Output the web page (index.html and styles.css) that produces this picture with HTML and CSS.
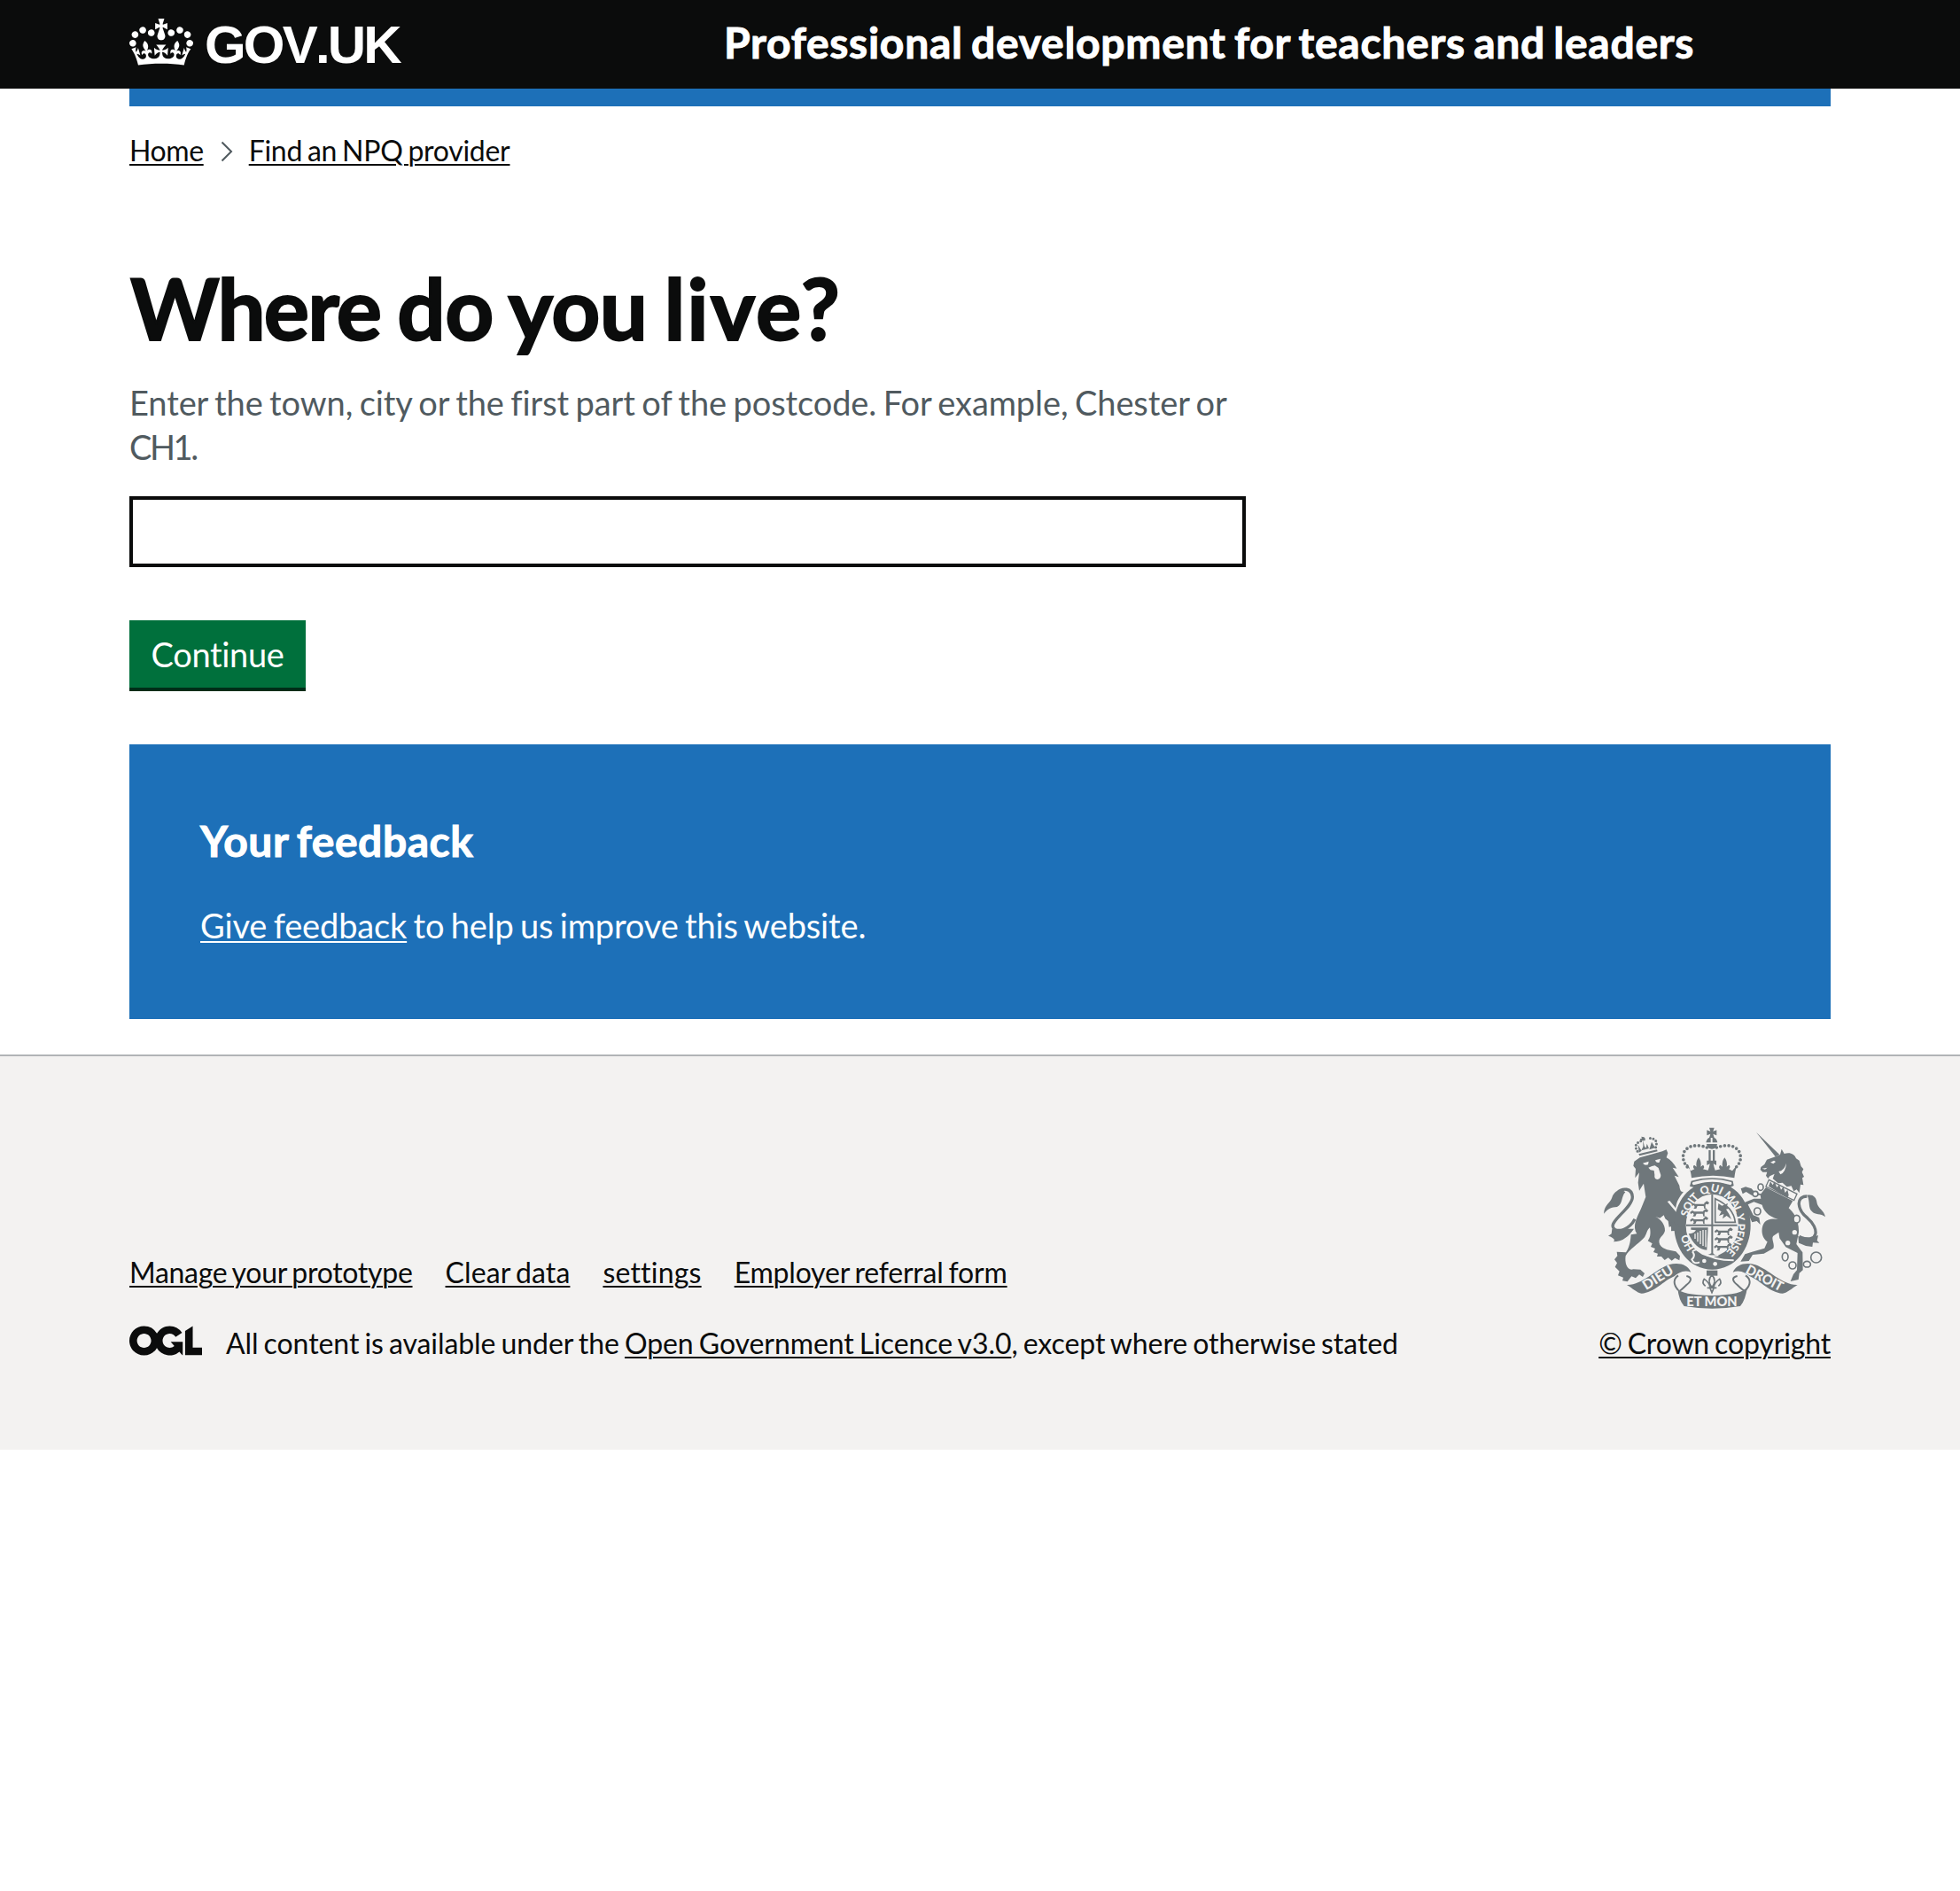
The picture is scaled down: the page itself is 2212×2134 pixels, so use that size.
FILE: index.html
```html
<!DOCTYPE html>
<html lang="en">
<head>
<meta charset="utf-8">
<title>Where do you live?</title>
<link rel="stylesheet" href="styles.css">
</head>
<body>
<header class="header">
  <div class="container header-inner">
    <a class="logo" href="#">
      <svg class="logo-crown" viewBox="0 0 132 97" aria-hidden="true"><path d="M25 30.2c3.5 1.5 7.7-.2 9.1-3.7 1.5-3.6-.2-7.8-3.9-9.2-3.6-1.4-7.6.3-9.1 3.9-1.4 3.5.3 7.5 3.9 9zM9 39.5c3.6 1.5 7.8-.2 9.2-3.7 1.5-3.6-.2-7.8-3.9-9.1-3.6-1.5-7.6.2-9.1 3.8-1.4 3.5.3 7.5 3.8 9zM4.4 57.2c3.5 1.5 7.7-.2 9.1-3.8 1.5-3.6-.2-7.7-3.9-9.1-3.5-1.5-7.6.3-9.1 3.8-1.4 3.5.3 7.6 3.9 9.1zm38.3-21.4c3.5 1.5 7.7-.2 9.1-3.8 1.5-3.6-.2-7.7-3.9-9.1-3.6-1.5-7.6.3-9.1 3.8-1.3 3.6.4 7.7 3.9 9.1zm64.4-5.6c-3.6 1.5-7.8-.2-9.1-3.7-1.5-3.6.2-7.8 3.8-9.2 3.6-1.4 7.7.3 9.2 3.9 1.3 3.5-.4 7.5-3.9 9zm15.9 9.3c-3.6 1.5-7.7-.2-9.1-3.7-1.5-3.6.2-7.8 3.7-9.1 3.6-1.5 7.7.2 9.2 3.8 1.5 3.5-.3 7.5-3.8 9zm4.7 17.7c-3.6 1.5-7.8-.2-9.2-3.8-1.5-3.6.2-7.7 3.9-9.1 3.6-1.5 7.7.3 9.2 3.8 1.3 3.5-.4 7.6-3.9 9.1zM89.3 35.8c-3.6 1.5-7.8-.2-9.2-3.8-1.4-3.6.2-7.7 3.9-9.1 3.6-1.5 7.7.3 9.2 3.8 1.4 3.6-.3 7.7-3.9 9.1zM69.7 17.7l8.9 4.7V9.3l-8.9 2.8c-.2-.3-.5-.6-.9-.9L72.4 0H59.6l3.5 11.2c-.3.3-.6.5-.9.9l-8.8-2.8v13.1l8.8-4.7c.3.3.6.7.9.9l-5 15.4v.1c-.2.8-.4 1.6-.4 2.4 0 4.1 3.1 7.5 7 8.1h.2c.3 0 .7.1 1 .1.4 0 .7 0 1-.1h.2c4-.6 7.1-4.1 7.1-8.1 0-.8-.1-1.7-.4-2.4V34l-5.1-15.4c.4-.2.7-.6 1-.9zM66 92.8c16.9 0 32.8 1.1 47.1 3.2 4-16.9 8.9-26.7 14-33.5l-9.6-3.4c1 4.9 1.1 7.2 0 10.2-1.5-1.4-3-4.3-4.2-8.7L108.6 76c2.8-2 5-3.2 7.5-3.3-4.4 9.4-10 11.9-13.6 11.2-4.3-.8-6.3-4.6-5.6-7.9 1-4.7 5.7-5.9 8-.5 4.3-8.7-3-11.4-7.6-8.8 7.1-7.2 7.9-13.5 2.1-21.1-8 6.1-8.1 12.3-4.5 20.8-4.7-5.4-12.1-2.5-9.5 6.2 3.4-5.2 7.9-2 7.2 3.1-.6 4.3-6.4 7.8-13.5 7.2-10.3-.9-10.9-8-11.2-13.8 2.5-.5 7.1 1.8 11 7.3L80.2 60c-4.1 4.4-8 5.3-12.3 5.4 1.4-4.4 8-11.6 8-11.6H55.5s6.4 7.2 7.9 11.6c-4.2-.1-8-1-12.3-5.4l1.4 16.4c3.9-5.5 8.5-7.7 10.9-7.3-.3 5.8-.9 12.8-11.1 13.8-7.2.6-12.9-2.9-13.5-7.2-.7-5 3.8-8.3 7.1-3.1 2.7-8.7-4.6-11.6-9.4-6.2 3.7-8.5 3.6-14.7-4.6-20.8-5.8 7.6-5 13.9 2.2 21.1-4.7-2.6-11.9.1-7.7 8.8 2.3-5.5 7.1-4.2 8.1.5.7 3.3-1.3 7.1-5.7 7.9-3.5.7-9-1.8-13.5-11.2 2.5.1 4.7 1.3 7.5 3.3l-4.7-15.4c-1.2 4.4-2.7 7.2-4.3 8.7-1.1-3-.9-5.3 0-10.2l-9.5 3.4c5 6.9 9.9 16.7 14 33.5 14.8-2.1 30.8-3.2 47.7-3.2z"/></svg>
      <span class="logo-text">GOV.UK</span>
    </a>
    <a class="service-name" href="#">Professional development for teachers and leaders</a>
  </div>
</header>

<div class="container">
  <div class="header-bar"></div>
  <nav class="breadcrumbs">
    <a class="crumb-home" href="#">Home</a>
    <svg class="chevron" viewBox="0 0 14 24" aria-hidden="true"><path d="M1.500 1.500L12 12L1.500 22.500"/></svg>
    <a class="crumb-page" href="#">Find an NPQ provider</a>
  </nav>

  <main class="main">
    <h1 class="title"><label for="location"><span class="title-start">Where</span> do you <span class="title-end">live?</span></label></h1>
    <p class="hint">Enter the town, city or the first part of the postcode. For example, Chester or<br><span class="code">CH1.</span></p>
    <input class="input" id="location" type="text">
    <button class="button">Continue</button>
  </main>

  <section class="feedback">
    <h2 class="feedback-title">Your feedback</h2>
    <p class="feedback-text"><a href="#">Give feedback</a> to help us improve this website.</p>
  </section>
</div>

<footer class="footer">
  <div class="container footer-inner">
    <div class="footer-main">
      <nav class="footer-links">
        <a class="link-manage" href="#">Manage your prototype</a>
        <a class="link-clear" href="#">Clear data</a>
        <a class="link-settings" href="#">settings</a>
        <a class="link-employer" href="#">Employer referral form</a>
      </nav>
      <div class="licence">
        <svg class="ogl" viewBox="0 0 483.200 195.700" aria-hidden="true"><path d="M421.5 142.8V.1l-50.7 32.3v161.1h112.4v-50.7zm-122.3-9.6A47.12 47.12 0 0 1 221 97.8c0-26 21.100-47.100 47.100-47.100 16.700 0 31.400 8.700 39.700 21.800l42.700-27.200A97.63 97.63 0 0 0 268.100 0c-36.500 0-68.300 20.100-85.100 49.700A98 98 0 0 0 97.800 0C43.900 0 0 43.900 0 97.800s43.900 97.800 97.800 97.800c36.500 0 68.300-20.100 85.100-49.700a97.76 97.76 0 0 0 149.600 25.400l19.400 22.200h3v-87.800h-80l24.300 27.500zM97.800 145c-26 0-47.100-21.100-47.100-47.100s21.100-47.100 47.100-47.100 47.100 21.100 47.100 47.100S123.800 145 97.800 145"/></svg>
        <span class="licence-text">All content is available under the <a href="#">Open Government Licence v3.0</a>, except where otherwise stated</span>
      </div>
    </div>
    <div class="crown">
      <svg class="arms" viewBox="60 64 750 615" aria-hidden="true">
        <defs>
          <path id="garter" d="M427 509A97 114 0 0 1 427 283A97 114 0 0 1 427 509"/>
          <g id="walker"><path d="M0 8l8-6 6 4h30l8-8 3 2-6 10v10l5 2h-9l-2-9H22l-4 9h-9l4-6-3-6-8 4z"/><path d="M44 4l10-8 8 6-4 6z"/></g>
        </defs>
        <!-- lion -->
        <path d="M163 180L182 167L258 146L272 140L277 152L272 167C285 174 297 186 307 204L293 201L314 233L299 228L316 262C318 280 322 285 330 282C317 300 305 312 303 345L331 388L337 412L328 426L319 410L312 422L300 415L288 416L289 400L281 402L278 382L268 374L263 362L250 372L235 367C255 377 268 395 267 415C262 435 240 438 250 462C262 480 285 480 304 485L318 500L316 515L301 507L290 516L278 506L266 514L255 502L240 502L243 492L228 487L234 475L219 469L224 458L209 449C216 440 220 428 216 404C205 412 205 430 195 440C175 462 148 475 134 500C130 525 140 552 160 545L184 546L198 559L192 571L180 563L168 575L154 569L140 587L123 584L126 573L108 566L113 552L98 537L105 524L96 512L106 500L104 486L135 488C150 465 150 445 152 428L172 425C155 400 172 370 186 340L202 300L195 255L180 279L176 252L180 218L166 236L168 205L160 195Z"/>
        <path d="M165 375C150 405 105 430 91 402C82 380 158 335 157 300C155 268 122 270 108 284" class="tail"/>
        <path d="M133 284C112 270 95 282 88 302C82 322 62 326 60 357C75 340 85 335 105 334C125 325 118 300 133 284ZM88 408L86 425L75 432C95 438 100 448 92 452C125 452 145 432 162 408Z"/>
        <path class="cut" d="M192 186l20-6-2 11q-12 4-18-5zM234 176l18-5-4 12q-12 3-14-7zM211 201l12-5 10-2 12 8 8 24q0 14-12 15-11-2-9-16l-2-14-12-2zM275 316l56 66 6-3-54-66z"/>
        <path d="M178 155L240 140L242 146L181 161Z"/>
        <g class="beads small"><path d="M174 146Q158 120 187 111"/><path d="M236 132Q246 103 215 101"/></g>
        <path d="M187 96l10 2 2 12-8-1zM182 104l17-4 2 8-16 2zM193 108l4 20 8 10-18 5 6-13zM176 124l12 20-9 6zM222 114l12 20-20 6zM206 120l7 16-11 3z"/>
        <!-- royal crown -->
        <path d="M417 66h17l-4 12 12-4v18l-12-5 4 13h-17l4-13-12 5V74l12 4z"/>
        <path d="M406 116q3-16 16-18v18zM428 98q14 2 17 18h-17zM408 121h36q-2 17-18 17t-18-17zM415 142h7v36h-7zM429 142h7v36h-7z"/>
        <g class="beads"><path d="M409 133C390 125 345 118 330 152Q323 185 352 207"/><path d="M442 133C465 125 505 118 521 152Q530 185 499 207"/></g>
        <path d="M337 190l18 22 12-6q-8-8-1-14l8 6q-4-16 7-31 11 15 7 31l8-6q8 8-1 14l18 4q4-10 6-22l-10 5v-16h32v16l-10-5q2 12 6 22l18-4q-9-6-1-14l8 6q-4-16 7-31 11 15 7 31l8-6q7 6-1 14l12 6 18-22q-8 18-11 46-72-16-145 0-3-28-12-46z"/>
        <path d="M356 246Q426 226 497 246L500 262L488 268Q426 242 366 268L351 264Z"/>
        <path class="cut" d="M362 250Q426 230 492 250Q496 254 490 260Q426 240 364 260Q356 256 362 250Z"/>
        <!-- garter and shield -->
        <path d="M427 249C505 249 557 318 557 397S505 546 427 546S298 476 298 397S350 249 427 249Z"/>
        <ellipse class="cut" cx="427" cy="397" rx="89" ry="106"/>
        <path d="M424 292h6v101h84v6h-84v92q6 8 14 5l-36 1q10-2 16-6V399h-85v-6h85z"/>
        <use href="#walker" x="355" y="318"/><use href="#walker" x="352" y="344"/><use href="#walker" x="352" y="370"/>
        <use href="#walker" x="435" y="408"/><use href="#walker" x="435" y="434"/><use href="#walker" x="433" y="460"/>
        <path d="M355 404L413 404L409 480Q370 478 347 425Q365 425 372 413L355 411Z"/>
        <path class="scratch" d="M405 412V470M396 412V466M387 415V460M378 420V452M369 425V442"/>
        <path class="tressure" d="M437 306V386H505Q500 335 437 306Z"/>
        <path d="M448 322l12 8 20-8-4 12 12 4-14 4 10 16 8 18-16-12-14 10 4-16-16 6 8-14-12-8z"/>
        <path d="M447 498Q490 480 505 445L520 480L480 520Z"/>
        <text class="motto"><textPath href="#garter" startOffset="11.500%" textLength="54">HO</textPath></text>
        <text class="motto"><textPath href="#garter" startOffset="29.500%" textLength="78">SOIT</textPath></text>
        <text class="motto"><textPath href="#garter" startOffset="44%" textLength="68">QUI</textPath></text>
        <text class="motto"><textPath href="#garter" startOffset="56.500%" textLength="72">MAL</textPath></text>
        <text class="motto"><textPath href="#garter" startOffset="69%">Y</textPath></text>
        <text class="motto"><textPath href="#garter" startOffset="74%" textLength="106">PENSE</textPath></text>
        <path class="outline" d="M360 485Q372 472 390 485Q430 515 500 515M360 485Q372 500 358 512Q366 530 384 521"/>
        <circle class="cut" cx="400" cy="517" r="7"/><circle class="cut" cx="437" cy="527" r="7"/>
        <path d="M286 388l10-4 8 12 8-4 3 10 12-2 10 14-7 14-12-14-8 7-10-8-10 2z"/>
        <!-- unicorn -->
        <path d="M576 81L655 157L641 164Z"/>
        <path d="M641 164L657 157L662 138L671 154C692 148 706 156 711 170L722 177L728 197L736 206L731 216L738 232L732 236L736 260L726 258L722 287L713 275L703 281L695 263L680 266L665 252L650 254L632 238L638 222L622 230L616 238L609 228L613 216L598 216L590 208L592 199L604 190L612 174Z"/>
        <path class="cut" d="M624 183l12-6 6 4-8 7zM652 214q18-2 26-28-2 30-20 38zM596 204l18-3-8 6z"/>
        <path class="outline-dark" d="M619 242L714 290L704 312L609 265Z"/>
        <path d="M618 264l6-16 8 12 6-12 8 20 8-10 6 18 8-10 6 20 8-10 4 18-4 10z"/>
        <path d="M609 268L700 314L686 338C700 350 722 378 720 420L712 460L733 488L734 548L722 558L719 580L692 586L702 562L714 548L716 490L676 470L655 440L652 420L634 432C625 440 640 460 634 474L602 492L564 496L551 517L523 519L538 494L562 486L604 474L614 452C590 435 592 400 605 385Q620 370 650 376C615 365 600 345 596 327L568 317L548 326L566 362L586 370L590 394L578 382L562 386L534 326L538 318L568 306L592 306L590 294L560 294L542 283L530 290L524 272L540 266L560 272L572 285L592 290Z"/>
        <path class="tail" d="M722 435C790 462 790 405 750 372C715 345 708 298 748 298"/>
        <path d="M748 294C768 290 780 300 782 322C786 340 806 345 810 368C795 355 775 362 765 350C750 335 760 315 748 294ZM718 432L742 445L786 430L782 448L790 456L768 455L766 469L744 466L720 456Z"/>
        <g class="chain"><ellipse cx="591" cy="267" rx="9" ry="11"/><circle cx="573" cy="290" r="9"/><ellipse cx="580" cy="349" rx="11" ry="12"/><ellipse cx="713" cy="375" rx="11" ry="13"/><ellipse cx="674" cy="503" rx="10" ry="14"/><circle cx="699" cy="532" r="12"/><ellipse cx="748" cy="528" rx="12" ry="10"/><circle cx="779" cy="505" r="18"/></g>
        <circle class="cut" cx="706" cy="420" r="8"/><circle class="cut" cx="683" cy="456" r="8"/>
        <!-- motto scroll -->
        <path d="M138 598C190 600 235 545 280 530C310 520 345 527 355 555C330 545 310 560 300 568C260 585 230 625 188 627C172 625 158 610 138 598Z"/>
        <path d="M716 598C665 600 618 545 573 530C543 520 508 527 497 555C522 545 543 560 553 568C593 585 623 625 665 627C682 625 696 610 716 598Z"/>
        <path class="fold" d="M340 568Q368 575 340 598Q320 618 316 618M312 566Q286 585 312 616M512 568Q484 575 512 598Q532 618 538 618M540 566Q568 585 540 616"/>
        <path d="M310 610Q320 632 427 634Q532 632 546 604Q540 650 522 670Q427 686 332 670Q314 650 310 610Z"/>
        <path d="M408 549h37v18h-37z"/>
        <path class="lily" d="M426 564Q444 584 426 606Q408 584 426 564ZM420 606Q416 588 400 578Q390 592 404 602M432 606Q436 588 452 578Q462 592 448 602M410 608H442M420 610L426 624L432 610"/>
        <text class="scroll" transform="translate(203 617) rotate(-32)" textLength="114" lengthAdjust="spacingAndGlyphs">DIEU</text>
        <text class="scroll" x="340" y="670" textLength="172" lengthAdjust="spacingAndGlyphs">ET MON</text>
        <text class="scroll" transform="translate(537 557) rotate(28)" textLength="136" lengthAdjust="spacingAndGlyphs">DROIT</text>
      </svg>
      <a class="copyright" href="#">© Crown copyright</a>
    </div>
  </div>
</footer>
</body>
</html>
```
FILE: styles.css
```css
* { box-sizing: border-box; }
body {
  margin: 0;
  background: #fff;
  color: #0b0c0c;
  font-family: Lato, "Noto Sans", sans-serif;
  font-size: 38px;
  line-height: 50px;
  font-variant-ligatures: none;
}
h1, h2, p { margin: 0; }
a {
  color: inherit;
  text-decoration-thickness: 2px;
  text-underline-offset: 3px;
}
.container { width: 1920px; margin: 0 auto; }

.header { height: 100px; background: #0b0c0c; color: #fff; }
.header-inner { display: flex; align-items: flex-start; }
.header a { text-decoration: none; }
.logo { display: flex; width: 671px; padding-top: 21px; }
.logo-crown { width: 72px; height: 53px; fill: #fff; }
.logo-text {
  margin-left: 13px;
  font: bold 60px/60px "Liberation Sans", Arial, sans-serif;
  font-kerning: none;
  letter-spacing: -2.800px;
}
.service-name {
  padding-top: 18px;
  font-size: 48px;
  font-weight: 700;
  line-height: 60px;
  letter-spacing: .72px;
  word-spacing: -3px;
  -webkit-text-stroke: 1px currentColor;
}
.header-bar { height: 20px; background: #1d70b8; }

.breadcrumbs {
  display: flex;
  align-items: center;
  height: 40px;
  margin-top: 30px;
  font-size: 32px;
  line-height: 40px;
  letter-spacing: -.4px;
  word-spacing: -2px;
}
.crumb-page { letter-spacing: -.28px; }
.chevron { width: 14px; height: 24px; margin: 2px 18px 0 19px; fill: none; stroke: #505a5f; stroke-width: 2; }

.main { display: flex; flex-direction: column; align-items: flex-start; padding-top: 107px; }
.title {
  font-size: 96px;
  line-height: 100px;
  letter-spacing: -.500px;
  word-spacing: -3.800px;
  text-indent: 1px;
  -webkit-text-stroke: 2px currentColor;
}
.title-start { letter-spacing: -1.800px; }
.title-end { letter-spacing: 2px; }
.hint { margin-top: 32px; color: #505a5f; letter-spacing: -.08px; word-spacing: -2.200px; }
.code { letter-spacing: -2.400px; }
.input { width: 1260px; height: 80px; margin-top: 31px; border: 4px solid #0b0c0c; border-radius: 0; background: #fff; }
.button {
  width: 199px;
  height: 76px;
  margin-top: 60px;
  padding: 0;
  border: 0;
  background: #00703c;
  box-shadow: 0 4px 0 #002d18;
  color: #fff;
  font: inherit;
  letter-spacing: -.35px;
}
.feedback { height: 310px; margin-top: 64px; padding: 79px 80px 0; background: #1d70b8; color: #fff; }
.feedback-title { font-size: 48px; line-height: 60px; letter-spacing: .550px; word-spacing: -3px; -webkit-text-stroke: 1px currentColor; }
.feedback-text { margin-top: 40px; letter-spacing: -.15px; word-spacing: -2.200px; }

.footer { height: 446px; margin-top: 40px; border-top: 2px solid #b1b4b6; background: #f3f2f1; font-size: 32px; line-height: 40px; letter-spacing: -.07px; word-spacing: -2px; }
.footer-inner { display: flex; justify-content: space-between; padding-top: 80px; }
.footer-main { padding-top: 144px; }
.footer-links { display: flex; gap: 37px; }
.link-manage { letter-spacing: -.29px; }
.link-clear { letter-spacing: .1px; }
.link-settings { letter-spacing: .2px; }
.link-employer { letter-spacing: -.2px; }
.licence { display: flex; margin-top: 40px; }
.ogl { width: 82px; height: 34px; margin: 0 27px 0 0; fill: #0b0c0c; }
.crown { display: flex; flex-direction: column; align-items: flex-end; }
.arms { width: 250px; height: 205px; margin-right: 6px; fill: #6f777b; letter-spacing: 0; word-spacing: 0; }
.copyright { margin-top: 19px; letter-spacing: -.15px; }

.cut { fill: #f3f2f1; }
.tail { fill: none; stroke: #6f777b; stroke-width: 10; }
.beads { fill: none; stroke: #6f777b; stroke-width: 11; stroke-linecap: round; stroke-dasharray: 0 14; }
.small { stroke-width: 9; stroke-dasharray: 0 11; }
.scratch { stroke: #f3f2f1; stroke-width: 4; }
.outline { fill: none; stroke: #f3f2f1; stroke-width: 6; }
.outline-dark { fill: #f3f2f1; stroke: #6f777b; stroke-width: 4; }
.tressure { fill: none; stroke: #6f777b; stroke-width: 5; }
.lily { fill: #f3f2f1; stroke: #6f777b; stroke-width: 5; }
.chain { fill: #f3f2f1; stroke: #6f777b; stroke-width: 5; }
.fold { fill: none; stroke: #6f777b; stroke-width: 6; }
.motto { fill: #f3f2f1; font: 900 37px Lato, sans-serif; }
.scroll { fill: #f3f2f1; font: 900 46px Lato, sans-serif; }
```
